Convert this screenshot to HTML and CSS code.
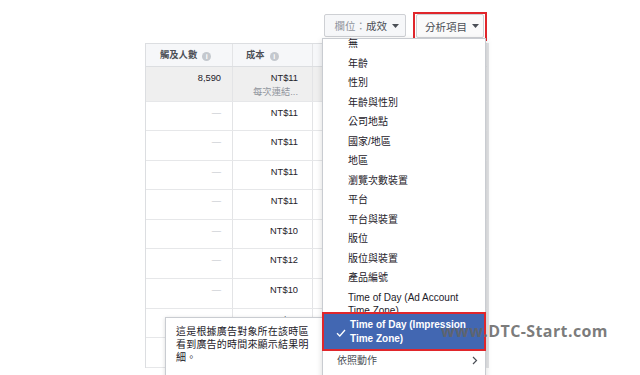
FILE: index.html
```html
<!DOCTYPE html>
<html lang="zh-Hant">
<head>
  <meta charset="UTF-8">
  <title>分析項目</title>
  <link rel="stylesheet" href="styles.css">
</head>
<body>

  <div class="report">
    <div class="toolbar">
      <button class="btn"><span class="muted">欄位：</span>成效<svg class="caret" width="7" height="4" viewBox="0 0 7 4"><path d="M0 0h7L3.5 4z"/></svg></button>
      <div class="mark">
        <button class="btn btn-break">分析項目<svg class="caret" width="7" height="4" viewBox="0 0 7 4"><path d="M0 0h7L3.5 4z"/></svg></button>
      </div>
    </div>

    <div class="grid">
      <div class="row head">
        <div class="cell">觸及人數<span class="info">i</span></div>
        <div class="cell">成本<span class="info">i</span></div>
        <div class="cell"></div>
      </div>
      <div class="row total">
        <div class="cell num">8,590</div>
        <div class="cell num">NT$11<div class="sub">每次連結...</div></div>
        <div class="cell"></div>
      </div>
      <div class="row"><div class="cell num dash">—</div><div class="cell num">NT$11</div><div class="cell"></div></div>
      <div class="row"><div class="cell num dash">—</div><div class="cell num">NT$11</div><div class="cell"></div></div>
      <div class="row"><div class="cell num dash">—</div><div class="cell num">NT$11</div><div class="cell"></div></div>
      <div class="row"><div class="cell num dash">—</div><div class="cell num">NT$11</div><div class="cell"></div></div>
      <div class="row"><div class="cell num dash">—</div><div class="cell num">NT$10</div><div class="cell"></div></div>
      <div class="row"><div class="cell num dash">—</div><div class="cell num">NT$12</div><div class="cell"></div></div>
      <div class="row"><div class="cell num dash">—</div><div class="cell num">NT$10</div><div class="cell"></div></div>
      <div class="row"><div class="cell num dash"></div><div class="cell num">NT$10</div><div class="cell"></div></div>
      <div class="row"><div class="cell"></div><div class="cell"></div><div class="cell"></div></div>
    </div>
  </div>

  <!-- tooltip for the hovered option -->
  <div class="tip">這是根據廣告對象所在該時區看到廣告的時間來顯示結果明細。</div>

  <!-- breakdown dropdown -->
  <div class="menu">
    <ul class="menu-list">
      <li>無</li>
      <li>年齡</li>
      <li>性別</li>
      <li>年齡與性別</li>
      <li>公司地點</li>
      <li>國家/地區</li>
      <li>地區</li>
      <li>瀏覽次數裝置</li>
      <li>平台</li>
      <li>平台與裝置</li>
      <li>版位</li>
      <li>版位與裝置</li>
      <li>產品編號</li>
      <li class="tight">Time of Day (Ad Account Time Zone)</li>
    </ul>
    <div class="picked">
      <div class="picked-item">
        <svg class="check" width="10" height="8" viewBox="0 0 10 8"><path d="M1 4.2l2.8 2.8L9 1" fill="none" stroke="#fff" stroke-width="1.3"/></svg>
        Time of Day (Impression Time Zone)
      </div>
    </div>
    <div class="menu-more">
      <span>依照動作</span>
      <svg width="6" height="9" viewBox="0 0 6 9"><path d="M1 1l3.5 3.5L1 8" fill="none" stroke="#4b4f56" stroke-width="1.2"/></svg>
    </div>
  </div>

  <div class="watermark">www.DTC-Start.com</div>

</body>
</html>
```

FILE: styles.css
```css
* {
  box-sizing: border-box;
  margin: 0;
  padding: 0;
}
body {
  font-family: 'Liberation Sans', 'Noto Sans CJK TC', sans-serif;
  background-color: #fff;
  color: #1d2129;
  width: 640px;
  height: 375px;
  overflow: hidden;
  position: relative;
}
.report {
  margin-left: 145px;
  width: 344px;
}

/* Toolbar */
.toolbar {
  height: 43px;
  display: flex;
  justify-content: flex-end;
  align-items: flex-start;
  gap: 7px;
  padding-top: 12px;
  padding-right: 2px;
}
.btn {
  display: flex;
  align-items: center;
  height: 23px;
  margin-top: 2px;
  padding: 0 6px 0 10px;
  font-family: inherit;
  font-size: 10.5px;
  color: #4b4f56;
  background-color: #f6f7f9;
  border: 1px solid #ced0d4;
  border-radius: 2px;
}
.btn .muted {
  color: #90949c;
}
.caret {
  margin-left: 5px;
  fill: #4b4f56;
}
.mark {
  border: 2px solid #e0262b;
  padding: 0 1px 1px;
}
.btn-break {
  margin-top: 0;
  height: 24px;
  padding: 0 4px 0 8px;
  background-color: #fafafa;
}

/* Table */
.grid {
  border-left: 1px solid #dcdee1;
  border-right: 2px solid #e3e4e6;
  font-size: 9.3px;
}
.row {
  display: grid;
  grid-template-columns: 87px 80px 1fr;
  height: 29.6px;
  border-bottom: 1px solid #e6e7e9;
}
.cell {
  border-right: 1px solid #e3e4e6;
  padding: 5px 11px 0 14px;
  line-height: 12px;
}
.cell:nth-child(2) {
  padding-right: 14px;
}
.num {
  text-align: right;
}
.dash {
  color: #bec2c9;
}
.head {
  height: 24px;
  border-top: 1px solid #dcdee1;
  border-bottom: 1px solid #dcdee1;
  background-color: #f6f7f9;
}
.head .cell {
  font-weight: bold;
  color: #4b4f56;
  padding-top: 5px;
}
.head .cell:nth-child(2) {
  padding-left: 13px;
}
.info {
  display: inline-block;
  width: 9px;
  height: 9px;
  margin-left: 5px;
  border-radius: 50%;
  background-color: #c4c8ce;
  color: #fff;
  font-size: 7px;
  line-height: 9px;
  text-align: center;
  vertical-align: -1px;
}
.total {
  height: 34.5px;
  background-color: #efefef;
}
.total .cell {
  padding-top: 4px;
  line-height: 14px;
}
.sub {
  color: #90949c;
}

/* Tooltip */
.tip {
  position: absolute;
  left: 165px;
  top: 317px;
  width: 162px;
  height: 70px;
  padding: 7px 10px;
  background-color: #fff;
  border: 1px solid #c9ccd1;
  box-shadow: 0 1px 4px rgba(0, 0, 0, 0.15);
  font-size: 10px;
  line-height: 13px;
  letter-spacing: 0.2px;
  z-index: 1;
}

/* Dropdown */
.menu {
  position: absolute;
  left: 322px;
  top: 38px;
  width: 164px;
  height: 345px;
  background-color: #fff;
  border: 1px solid #c9ccd1;
  box-shadow: 0 2px 6px rgba(0, 0, 0, 0.15);
  font-size: 10px;
  z-index: 2;
}
.menu-list {
  list-style: none;
  margin-top: -5px;
}
.menu-list li {
  padding: 3px 8px 3px 25px;
  line-height: 13.5px;
}
.menu-list li.tight {
  padding-bottom: 0;
}
.picked {
  position: relative;
  margin: -5.5px -1px 0;
  border: 2px solid #e0262b;
}
.picked-item {
  position: relative;
  padding: 4px 8px 3px 26px;
  line-height: 14px;
  background-color: #4267b2;
  color: #fff;
  font-weight: bold;
}
.check {
  position: absolute;
  left: 12px;
  top: 15px;
}
.menu-more {
  display: flex;
  justify-content: space-between;
  align-items: center;
  padding: 3px 7px 3px 14px;
  line-height: 13.5px;
  color: #4b4f56;
}

/* Watermark */
.watermark {
  position: absolute;
  left: 441px;
  top: 323px;
  font-family: 'Open Sans', sans-serif;
  font-weight: bold;
  font-size: 16px;
  line-height: 16px;
  letter-spacing: 0.4px;
  color: rgba(100, 100, 100, 0.85);
  z-index: 3;
}
```
